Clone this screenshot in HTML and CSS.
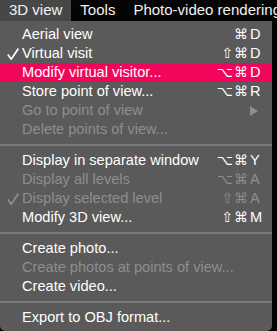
FILE: index.html
```html
<!DOCTYPE html>
<html lang="en">
<head>
    <meta charset="UTF-8">
    <meta name="viewport" content="width=device-width, initial-scale=1.0">
    <title>3D view menu</title>
    <link rel="stylesheet" href="styles.css">
</head>
<body>
    <div class="menubar">
        <span class="menubar-item active">3D view</span>
        <span class="menubar-item">Tools</span>
        <span class="menubar-item">Photo-video rendering</span>
    </div>

    <div class="menu">
        <div class="item"><span class="check"></span><span class="label">Aerial view</span><span class="mods">⌘</span><span class="key">D</span></div>
        <div class="item">
            <span class="check">
                <svg width="12" height="12" viewBox="0 0 12 12"><path d="M0.9 6.6 L4.2 11.2 L11.4 0.6" fill="none" stroke="currentColor" stroke-width="1.7"/></svg>
            </span>
            <span class="label">Virtual visit</span><span class="mods">⇧⌘</span><span class="key">D</span>
        </div>
        <div class="item selected"><span class="check"></span><span class="label">Modify virtual visitor...</span><span class="mods">⌥⌘</span><span class="key">D</span></div>
        <div class="item"><span class="check"></span><span class="label">Store point of view...</span><span class="mods">⌥⌘</span><span class="key">R</span></div>
        <div class="item disabled">
            <span class="check"></span><span class="label">Go to point of view</span><span class="mods"></span>
            <span class="key">
                <svg width="8" height="10" viewBox="0 0 8 10"><path d="M0 0 L8 5 L0 10 Z" fill="currentColor"/></svg>
            </span>
        </div>
        <div class="item disabled"><span class="check"></span><span class="label">Delete points of view...</span><span class="mods"></span><span class="key"></span></div>

        <div class="separator"></div>

        <div class="item"><span class="check"></span><span class="label">Display in separate window</span><span class="mods">⌥⌘</span><span class="key">Y</span></div>
        <div class="item disabled"><span class="check"></span><span class="label">Display all levels</span><span class="mods">⌥⌘</span><span class="key">A</span></div>
        <div class="item disabled">
            <span class="check">
                <svg width="12" height="12" viewBox="0 0 12 12"><path d="M0.9 6.6 L4.2 11.2 L11.4 0.6" fill="none" stroke="currentColor" stroke-width="1.7"/></svg>
            </span>
            <span class="label">Display selected level</span><span class="mods">⇧⌘</span><span class="key">A</span>
        </div>
        <div class="item"><span class="check"></span><span class="label">Modify 3D view...</span><span class="mods">⇧⌘</span><span class="key">M</span></div>

        <div class="separator"></div>

        <div class="item"><span class="check"></span><span class="label">Create photo...</span><span class="mods"></span><span class="key"></span></div>
        <div class="item disabled"><span class="check"></span><span class="label">Create photos at points of view...</span><span class="mods"></span><span class="key"></span></div>
        <div class="item"><span class="check"></span><span class="label">Create video...</span><span class="mods"></span><span class="key"></span></div>

        <div class="separator"></div>

        <div class="item"><span class="check"></span><span class="label">Export to OBJ format...</span><span class="mods"></span><span class="key"></span></div>
    </div>
</body>
</html>
```

FILE: styles.css
```css
/* Page */
body {
    margin: 0;
    padding: 0;
    width: 277px;
    height: 331px;
    overflow: hidden;
    background: #000000;
    font-family: "Liberation Sans", Arial, sans-serif;
    color: #ffffff;
}

/* Menu bar */
.menubar {
    display: flex;
    height: 21px;
    line-height: 20px;
    font-size: 15px;
    background: #050505;
    white-space: nowrap;
    overflow: hidden;
}

.menubar-item {
    padding: 0 9px;
    color: #f2f2f2;
    flex-shrink: 0;
}

.menubar-item.active {
    background: #474747;
}

/* Dropdown panel */
.menu {
    width: 272px;
    padding: 4px 0;
    background: #5a5a5a;
    border-radius: 0 0 5px 5px;
    box-sizing: border-box;
}

.item {
    display: grid;
    grid-template-columns: 22px 1fr auto 14px;
    align-items: center;
    height: 19px;
    line-height: 19px;
    padding-right: 8px;
    font-size: 14.6px;
    color: #ffffff;
    white-space: nowrap;
}

.item.selected {
    background: #f2065b;
}

.item.disabled {
    color: #8e8e8e;
}

.check {
    display: flex;
    align-items: center;
    padding-left: 7px;
    height: 19px;
}

/* Modifier keys sit right against the key letter */
.mods {
    font-family: "DejaVu Sans", sans-serif;
    font-size: 14px;
    letter-spacing: 1px;
    margin-right: 1px;
    text-align: right;
}

.key {
    display: flex;
    align-items: center;
    height: 19px;
}

.separator {
    height: 2px;
    margin: 5px 0;
    background: #7a7a7a;
}
```
